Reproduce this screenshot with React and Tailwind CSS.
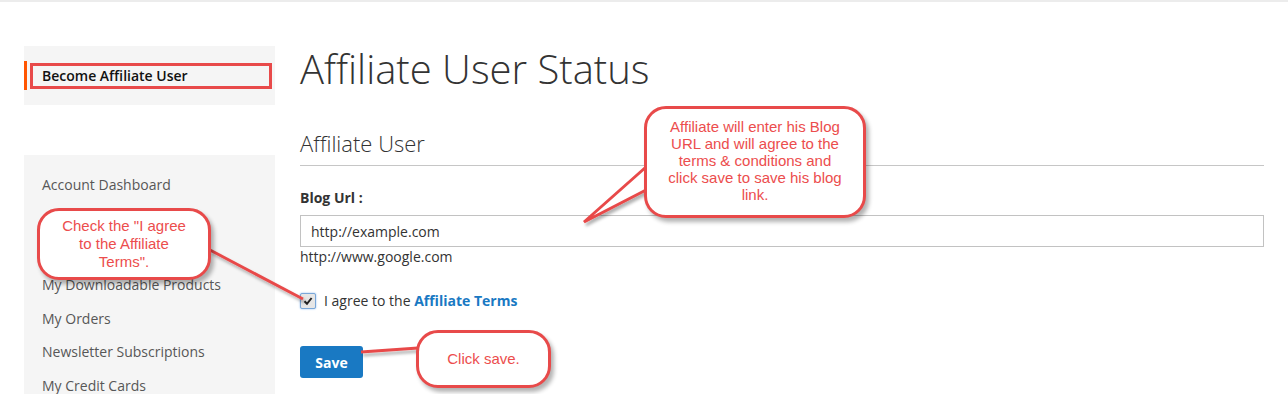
import React from 'react';

const NAV = [
  'Account Dashboard',
  'Account Information',
  'Address Book',
  'My Downloadable Products',
  'My Orders',
  'Newsletter Subscriptions',
  'My Credit Cards',
];

function Callout({ className, children }) {
  return (
    <div
      className={`absolute rounded-[22px] border-[3px] border-[#e84a4a] bg-white text-center text-[#ec4d4d] shadow-[3px_4px_4px_rgba(0,0,0,0.3)] ${className}`}
      style={{ fontFamily: '"Liberation Sans", Arial, sans-serif' }}
    >
      {children}
    </div>
  );
}

export default function App() {
  return (
    <div className="relative h-[394px] w-[1288px] overflow-hidden bg-white text-[#333]" style={{ fontFamily: '"Open Sans", sans-serif' }}>
      <div className="h-[2px] bg-[#ececec]" />

      <div className="flex gap-[25px] pl-[24px] pr-[24px] pt-[44px]">
        {/* Sidebar */}
        <aside className="w-[251px] shrink-0">
          <div className="bg-[#f5f5f5] py-[15px]">
            <div className="flex h-[29px] items-center border-l-[3px] border-[#ff5501] pl-[3px]">
              <div className="flex h-[26px] w-[242px] items-center border-[3px] border-[#e84a4a] pl-[9px] text-[14px] font-semibold text-[#111]">
                Become Affiliate User
              </div>
            </div>
          </div>

          <div className="mt-[50px] h-[300px] bg-[#f5f5f5] pt-[13px]">
            {NAV.map((item) => (
              <div key={item} className="flex h-[33.4px] items-center pl-[18px] text-[14px] text-[#575757]">
                {item}
              </div>
            ))}
          </div>
        </aside>

        {/* Main */}
        <main className="flex-1">
          <h1 className="mt-[-1px] text-[40px] font-light leading-[48px] text-[#333]">Affiliate User Status</h1>

          <h2 className="mt-[36px] border-b border-[#c6c6c6] pb-[8px] text-[22px] font-light leading-[28px] text-[#333]">
            Affiliate User
          </h2>

          <div className="mt-[22px] text-[14px] font-bold leading-[20px]">Blog Url :</div>

          <div className="mt-[7px] flex h-[32px] items-center border border-[#c2c2c2] px-[10px] text-[14px]">
            http://example.com
          </div>
          <div className="mt-[0px] text-[14px] leading-[20px]">http://www.google.com</div>

          <div className="mt-[23px] flex items-center gap-[8px] text-[14px]">
            <span className="flex h-[16px] w-[16px] items-center justify-center rounded-[2px] border border-[#7aa7d8] bg-[#e6e6e6] shadow-[0_0_2px_#8ab8ee]">
              <svg width="10" height="10" viewBox="0 0 10 10">
                <path d="M1.5 5.2 L4 7.8 L8.6 2" fill="none" stroke="#222" strokeWidth="2" />
              </svg>
            </span>
            <span>
              I agree to the <span className="font-bold text-[#1979c3]">Affiliate Terms</span>
            </span>
          </div>

          <button className="mt-[35px] h-[32px] w-[63px] rounded-[3px] bg-[#1979c3] text-[14px] font-bold text-white">
            Save
          </button>
        </main>
      </div>

      {/* Annotation connectors */}
      <svg className="pointer-events-none absolute left-0 top-0" width="1288" height="394">
        <defs>
          <filter id="sh" x="-20%" y="-20%" width="140%" height="140%">
            <feDropShadow dx="2" dy="3" stdDeviation="1.5" floodOpacity="0.3" />
          </filter>
        </defs>
        <g filter="url(#sh)">
          <polyline points="646,167 584,222 646,190" fill="white" stroke="#e84a4a" strokeWidth="3" strokeLinejoin="miter" />
          <line x1="210" y1="250" x2="303" y2="299" stroke="#e84a4a" strokeWidth="3" />
          <line x1="418" y1="348" x2="361" y2="352" stroke="#e84a4a" strokeWidth="3" />
        </g>
      </svg>

      <Callout className="left-[644px] top-[106px] flex h-[112px] w-[222px] items-center justify-center px-[8px] pb-[4px] text-[15px] leading-[17px]">
        <span>
          Affiliate will enter his Blog
          <br />
          URL and will agree to the
          <br />
          terms &amp; conditions and
          <br />
          click save to save his blog
          <br />
          link.
        </span>
      </Callout>

      <Callout className="left-[37px] top-[208px] flex h-[72px] w-[174px] items-start justify-center px-[10px] pt-[6px] text-[15px] leading-[18px]">
        <span>
          Check the "I agree
          <br />
          to the Affiliate
          <br />
          Terms".
        </span>
      </Callout>

      <Callout className="left-[416px] top-[330px] flex h-[58px] w-[135px] items-center justify-center text-[15px]">
        Click save.
      </Callout>
    </div>
  );
}
